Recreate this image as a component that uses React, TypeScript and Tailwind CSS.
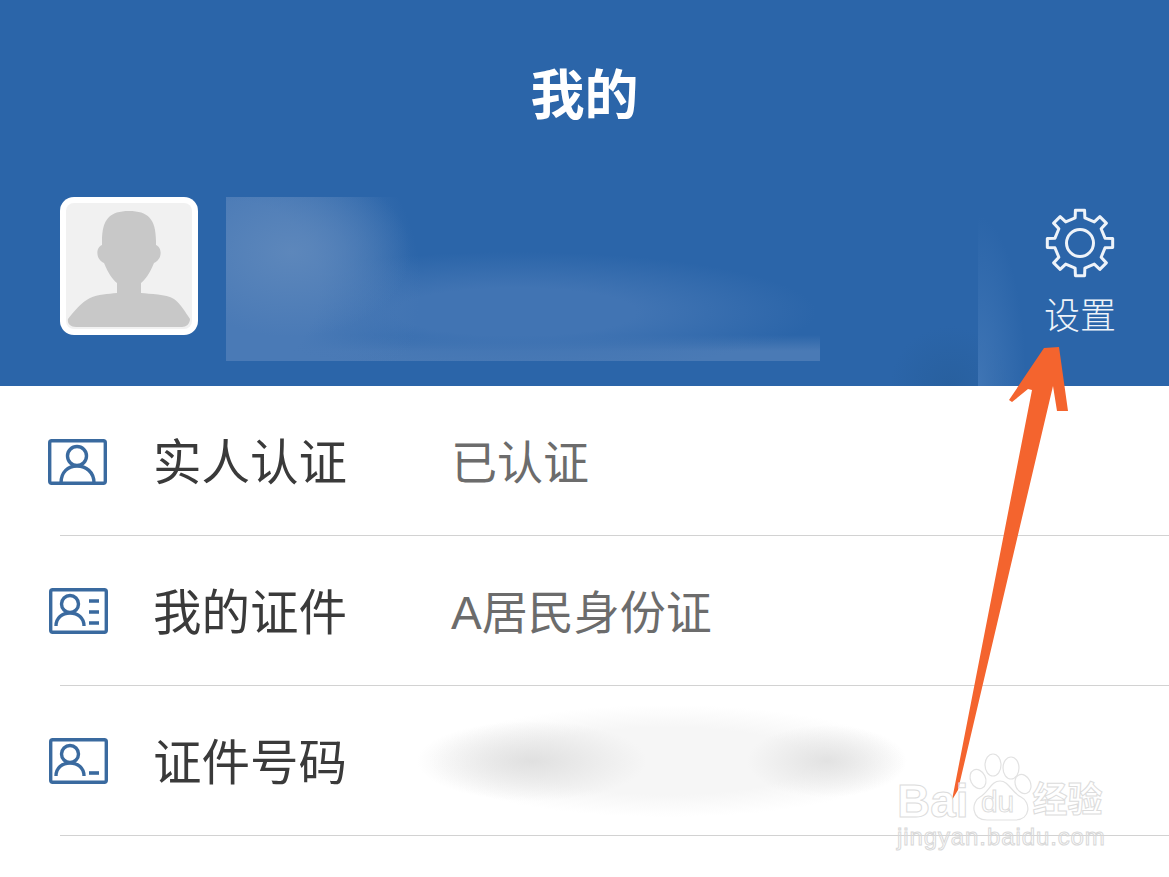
import React from "react";

function gearPath(cx: number, cy: number, ro: number, ri: number, teeth: number) {
  const pts: string[] = [];
  const step = 360 / teeth;
  const p = (a: number, r: number) => {
    const t = ((a - 90) * Math.PI) / 180;
    return `${(cx + r * Math.cos(t)).toFixed(2)} ${(cy + r * Math.sin(t)).toFixed(2)}`;
  };
  for (let i = 0; i < teeth; i++) {
    const a = i * step;
    pts.push(p(a - 11, ri), p(a - 8, ro), p(a + 8, ro), p(a + 11, ri));
  }
  return "M" + pts.join(" L") + " Z";
}

function CardFrame({ children }: { children: React.ReactNode }) {
  return (
    <svg width="59" height="46" viewBox="0 0 59 46" fill="none" stroke="#3a6a9f" strokeWidth="3.4">
      <rect x="1.7" y="1.7" width="55.6" height="42.6" rx="2" />
      {children}
    </svg>
  );
}

function Row({
  icon,
  label,
  value,
  blur,
  iconClass,
}: {
  icon: React.ReactNode;
  label: string;
  value?: string;
  blur?: boolean;
  iconClass: string;
}) {
  return (
    <div className="h-[150px] ml-[60px] border-b border-[#d2d2d2] flex items-center">
      <div className={`w-[59px] flex items-center ${iconClass}`}>{icon}</div>
      <div className="w-[297px] pt-[6px] text-[48.5px] leading-none text-[#3a3a3a]">{label}</div>
      {value && <div className="pt-[5px] pl-[1px] text-[46px] leading-none text-[#6c6c6c]">{value}</div>}
      {blur && (
        <div className="w-[500px] h-[120px] -ml-[33px] bg-[radial-gradient(ellipse_115px_40px_at_115px_60px,#e0e0e0,transparent),radial-gradient(ellipse_80px_36px_at_410px_60px,#e2e2e2,transparent),radial-gradient(ellipse_238px_56px_at_250px_60px,#f6f6f6,#f6f6f6_60%,transparent)]" />
      )}
    </div>
  );
}

export default function App() {
  return (
    <div className="relative w-[1169px] h-[877px] overflow-hidden bg-white font-['Liberation_Sans','Noto_Sans_CJK_SC',sans-serif]">
      <header className="h-[386px] bg-[#2b65a9] flex flex-col">
        <div className="h-[197px] pt-[58px] text-center text-[54px] leading-[76px] font-bold text-white">我的</div>
        <div className="flex pl-[60px]">
          <div className="w-[138px] h-[138px] rounded-[14px] bg-white p-[6px]">
            <div className="w-full h-full rounded-[8px] bg-[#f1f1f1] overflow-hidden">
              <svg width="126" height="126" viewBox="0 0 126 126" fill="#c8c8c8">
                <path d="M36 38 C36 16 44 8 63 8 C82 8 90 16 90 38 L90 42 C96 44 97 56 88 60 C84 70 79 77 75 80 L75 90 C84 91 100 91 108 96 C114 100 120 110 124 116 C124 121 120 124 116 124 L10 124 C4 124 1 120 2 116 C8 108 16 99 24 95 C32 91 42 91 51 90 L51 80 C47 77 42 70 38 60 C29 56 30 44 36 42 Z" />
              </svg>
            </div>
          </div>
          <div className="w-[594px] h-[164px] ml-[28px] bg-[radial-gradient(ellipse_120px_85px_at_65px_55px,#5d87bb,transparent),radial-gradient(ellipse_185px_190px_at_10px_90px,#4a7ab6,#4a7ab6_45%,transparent),radial-gradient(ellipse_300px_60px_at_290px_115px,#4174b3,#4174b3_40%,transparent),linear-gradient(to_top,#4a7ab5,#4a7ab5_10px,transparent_26px)]" />
          <div className="w-[210px] h-[189px] bg-no-repeat bg-[radial-gradient(ellipse_48px_170px_at_0_100%,#3f75b5,transparent),radial-gradient(ellipse_60px_60px_at_130px_189px,#28609f,transparent)] [background-size:60px_176px,100%_100%] [background-position:158px_13px,0_0]" />
          <div className="w-[100px] flex flex-col items-center pt-[11px]">
            <svg width="70" height="70" viewBox="0 0 70 70" fill="none" stroke="#eef3f9" strokeWidth="3" strokeLinejoin="round">
              <path d={gearPath(35, 35, 33, 25.5, 8)} />
              <circle cx="35" cy="35" r="13.5" />
            </svg>
            <div className="mt-[19px] text-[36px] leading-[40px] text-[#eef3f9] font-light">设置</div>
          </div>
        </div>
      </header>

      <Row
        label="实人认证"
        value="已认证"
        iconClass="-ml-[12px] mr-[46px] mt-[3px]"
        icon={
          <CardFrame>
            <circle cx="29" cy="17" r="9.5" />
            <path d="M13 44 C13 33 20 27 29 27 C38 27 46 33 46 44" />
          </CardFrame>
        }
      />
      <Row
        label="我的证件"
        value="A居民身份证"
        iconClass="-ml-[11px] mr-[45px]"
        icon={
          <CardFrame>
            <circle cx="21" cy="16" r="8.5" />
            <path d="M7 38 C7 30 13 25 21 25 C29 25 35 30 35 38" />
            <path d="M40 13 H50 M40 24 H50 M40 35 H50" strokeWidth="3.6" />
          </CardFrame>
        }
      />
      <Row
        label="证件号码"
        blur
        iconClass="-ml-[11px] mr-[45px]"
        icon={
          <CardFrame>
            <circle cx="21" cy="16" r="8.5" />
            <path d="M7 38 C7 30 13 25 21 25 C29 25 35 30 35 38" />
            <path d="M40 35 H50" strokeWidth="3.6" />
          </CardFrame>
        }
      />

      <svg className="absolute inset-0" width="1169" height="877" fill="#f4642e">
        <path d="M1044 348 L1059 347 L1068 411 L1057 411 L1053 386 L958 790 L952 800 L1032 390 L1028 389 L1012 402 L1009 400 Z" />
      </svg>

      <div className="absolute left-[897px] top-[752px] flex flex-col text-transparent [-webkit-text-stroke:1px_#dcdcdc]">
        <div className="flex items-end">
          <div className="text-[46px] leading-none font-bold">Bai</div>
          <div className="grid -ml-[6px]">
            <svg className="col-start-1 row-start-1" width="70" height="72" fill="none" stroke="#e2e2e2" strokeWidth="1.2">
              <ellipse cx="15" cy="27" rx="7.5" ry="10" transform="rotate(-25 15 27)" />
              <ellipse cx="30" cy="13" rx="8" ry="11" />
              <ellipse cx="48" cy="16" rx="8" ry="11" />
              <ellipse cx="60" cy="32" rx="7.5" ry="10" transform="rotate(-25 60 32)" />
              <path d="M37 29 C28 29 26 40 17 45 C8 50 8 68 24 68 H52 C68 68 68 50 58 45 C48 40 46 29 37 29 Z" />
            </svg>
            <div className="col-start-1 row-start-1 self-end justify-self-center mb-[7px] text-[30px] leading-none">du</div>
          </div>
          <div className="mb-[7px] text-[35px] leading-none font-bold">经验</div>
        </div>
        <div className="mt-[1px] text-[24px] leading-none tracking-[0.9px] [-webkit-text-stroke:1px_#d8d8d8]">jingyan.baidu.com</div>
      </div>
    </div>
  );
}
